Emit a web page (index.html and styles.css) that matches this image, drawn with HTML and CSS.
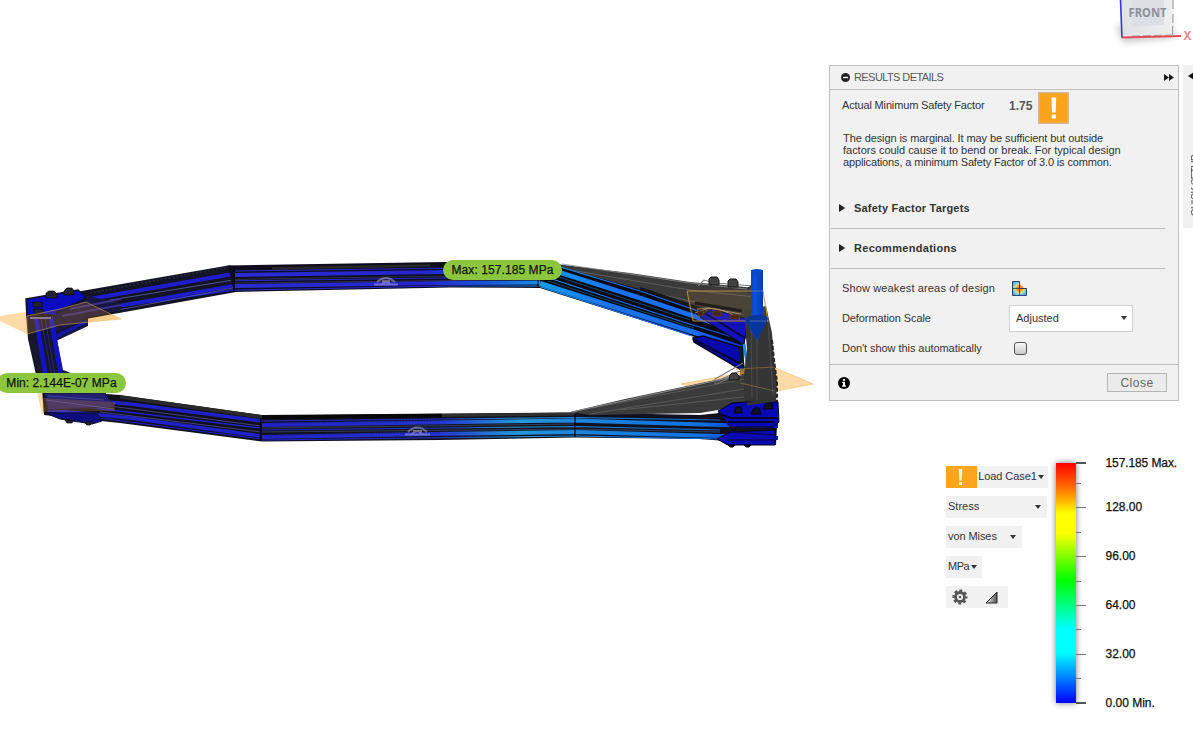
FILE: index.html
```
<!DOCTYPE html>
<html lang="en">
<head>
<meta charset="utf-8">
<title>Simulation Results</title>
<link rel="stylesheet" href="styles.css">
</head>
<body>
<main class="viewport">
  <svg class="scene" viewBox="0 0 1193 736" aria-hidden="true">
    <defs>
      <linearGradient id="stressTop" gradientUnits="userSpaceOnUse" x1="234" y1="0" x2="545" y2="0">
        <stop offset="0" stop-color="#2b2bd2"/><stop offset=".6" stop-color="#2424d0"/><stop offset=".8" stop-color="#1a50d8"/><stop offset="1" stop-color="#1590e6"/>
      </linearGradient>
      <linearGradient id="stressBottom" gradientUnits="userSpaceOnUse" x1="262" y1="0" x2="778" y2="0">
        <stop offset="0" stop-color="#2222c8"/><stop offset=".34" stop-color="#2233d0"/><stop offset=".5" stop-color="#2499da"/><stop offset=".6" stop-color="#1c86dc"/><stop offset=".85" stop-color="#0c72e2"/><stop offset="1" stop-color="#0714c8"/>
      </linearGradient>
      <linearGradient id="stressDiag" gradientUnits="userSpaceOnUse" x1="540" y1="0" x2="745" y2="0">
        <stop offset="0" stop-color="#129aea"/><stop offset=".35" stop-color="#1a72f0"/><stop offset=".75" stop-color="#1b6cf0"/><stop offset="1" stop-color="#0a2ad8"/>
      </linearGradient>
      <linearGradient id="arrow" x1="0" x2="1" y1="0" y2="0">
        <stop offset="0" stop-color="#0635b4"/><stop offset=".45" stop-color="#0a50d8"/><stop offset="1" stop-color="#052c98"/>
      </linearGradient>
      <linearGradient id="cube" x1="0" x2="1" y1="0" y2="0">
        <stop offset="0" stop-color="#dfe1e5"/><stop offset="1" stop-color="#efefef"/>
      </linearGradient>
      <filter id="soft" x="-30%" y="-50%" width="160%" height="200%"><feGaussianBlur stdDeviation="3"/></filter>
    </defs>

    <!-- work planes behind the frame -->
    <path d="M0 316L26 312L80 300L121 319L60 325L27 334L0 321Z" fill="#fddba6"/>
    <path d="M36 388L42 414L50 414L48 392Z" fill="#fddba6"/>
    <path d="M681 384L773 367L813 384L776 391L700 388Z" fill="#fddba6" stroke="#f6cb88"/>

    <!-- undeformed upper right rail -->
    <path d="M556 264L630 273L690 282L756 288L768 325L750 330L695 312L560 272Z" fill="#3a3a3a"/>
    <g fill="none" stroke="#666" stroke-width=".8">
      <path d="M562 264L690 283L756 290" stroke="#8b8b8b"/><path d="M570 270L690 290L755 297"/><path d="M590 279L690 301L742 311"/>
    </g>
    <path d="M640 289L705 311M610 284L640 293" stroke="#171717" stroke-width="4" fill="none"/>

    <!-- upper left rail -->
    <path d="M70 293L228 265.5L236 266V292L80 320Z" fill="#121324"/>
    <g fill="none" stroke="#1d1dcb">
      <path d="M84 300L233 274" stroke-width="4.2"/><path d="M60 316L233 286" stroke-width="3.8"/>
      <path d="M90 311L233 290" stroke-width="1.5"/><path d="M80 305L233 280" stroke="#6161a7" stroke-width=".8"/>
      <path d="M92 315L233 288" stroke="#6263b6" stroke-width=".7"/>
    </g>
    <path d="M90 293L228 267" stroke="#272735" stroke-width="2" stroke-dasharray="2 2"/>

    <!-- upper middle rail -->
    <path d="M228 265.5L445 262L562 265L540 288L450 287.5L234 292Z" fill="#0d0d1d"/>
    <path d="M272 268.5L430 265.5" stroke="#292929" stroke-width="2.5"/>
    <g fill="none" stroke="url(#stressTop)">
      <path d="M235 275L445 272L560 271" stroke-width="4"/><path d="M235 286L445 283L540 282.6" stroke-width="4"/>
      <path d="M235 271L445 268.2L560 267" stroke-width="1"/><path d="M235 280.8L445 278L545 277" stroke-width="1"/><path d="M235 290.2L450 286L540 286" stroke-width="1"/>
    </g>
    <path d="M235 279.3L450 276M235 283L545 279.5" stroke="#383858" stroke-width=".8"/>
    <path d="M234 268V291" stroke="#08080f"/>

    <!-- deformed upper right rail -->
    <path d="M556 266L646 291L706 315L748 328L742 352L540 288Z" fill="#050912"/>
    <g fill="none" stroke="url(#stressDiag)">
      <path d="M552 270L640 298L705 320L748 336" stroke-width="4.8"/>
      <path d="M540 283.5L693 332L742 348" stroke-width="5"/>
      <path d="M560 267L640 291L704 313" stroke-width="1.2"/>
      <path d="M546 277L680 321L745 341" stroke-width="1.1"/>
      <path d="M541 287L692 336" stroke-width="1.2"/>
    </g>
    <path d="M550 274L690 320M548 281L694 328" stroke="#18638d" stroke-width=".7"/>
    <path d="M538 278V288" stroke="#04131c"/>

    <!-- lower rail -->
    <path d="M42 389L120 395L262 415L575 412.5L700 415L778 407L776 445L700 439L575 437.5L440 440L262 441.5L120 423L44 415Z" fill="#11111e"/>
    <g fill="none" stroke="#2020c8">
      <path d="M46 396L130 404L261 421" stroke-width="3.5"/><path d="M48 410L130 418L261 436" stroke-width="3.6"/>
      <path d="M60 404L261 428" stroke-width="1.5"/><path d="M60 413L261 439" stroke-width="1"/>
      <path d="M110 406L261 426M100 412L261 432" stroke="#5555a0" stroke-width=".7"/>
    </g>
    <path d="M120 397L262 417" stroke="#292929" stroke-width="3.6"/>
    <path d="M262 417.2L442 415.6" stroke="#080808" stroke-width="3.5"/>
    <path d="M442 415.4L575 414" stroke="#303030" stroke-width="3"/>
    <g fill="none" stroke="url(#stressBottom)">
      <path d="M262 425L430 422.5L575 420.5L720 425L778 426" stroke-width="3.8"/>
      <path d="M262 437L430 434L575 432L720 436L778 438" stroke-width="4"/>
      <path d="M262 421L575 417.5L720 420" stroke-width="1.1"/>
      <path d="M262 430L575 426.5L720 430" stroke-width="1.1"/>
      <path d="M262 440L575 436L720 439" stroke-width="1"/>
    </g>
    <path d="M262 428L575 424M262 432L575 429L720 432" stroke="#3f4d63" stroke-width=".8" fill="none"/>
    <path d="M262 423.5L440 421.2M262 435.8L440 432.7" stroke="#16166a" stroke-width=".7" stroke-dasharray="1 2"/>
    <path d="M260.500 418V441M575 414V437" stroke="#06060c" stroke-width="1.3"/>

    <!-- left corner and upright -->
    <path d="M26 299L78 290L88 299L61 315L50 316L27 317Z" fill="#0b0bc1" stroke="#111128" stroke-width="1.5"/>
    <path d="M52 317L87 296L121 303V310L88 317V326L56 341Z" fill="#171740"/>
    <path d="M70 309L121 299M62 316L121 305" stroke="#3a3087" stroke-width="2"/>
    <path d="M56 313L86 299" stroke="#0e0e39" stroke-width="3"/>
    <path d="M55 334L87 319V324L57 339Z" fill="#14149c" stroke="#11112a"/>
    <path d="M26 314H52L63 370L76 375L64 390L39 388L28 339Z" fill="#17172b"/>
    <path d="M36 318L46 377M51 318L61 376" stroke="#1212cc" stroke-width="4.500"/>
    <path d="M41 319L52 376M45 318L55 376" stroke="#22228f" stroke-width="1"/>
    <path d="M30 318H51" stroke="#7773a4" stroke-width="2"/>
    <path d="M44 393H105L115 407L48 410Z" fill="#242071" stroke="#13132c"/>
    <path d="M46 400L114 409M48 396L104 400" stroke="#4444a0"/>
    <path d="M45 413H97L102 421L92 424L60 419Z" fill="#0d0d80" stroke="#11112a"/>
    <g fill="#23232e" stroke="#08080f" stroke-width=".7">
      <path d="M46 293L49 291H54L57 294V298H46ZM64 291L67 288H72L74 291V295H64Z"/>
      <path d="M33 302H42V307H33ZM34 309H43V314H34Z"/>
      <path d="M65 420H74L72 423H67ZM84 422H93L90 425H87Z"/>
    </g>
    <path d="M27 316L60 309L86 302L121 319L60 325L27 334Z" fill="#e59a2d" fill-opacity=".2" stroke="#eeb45f" stroke-opacity=".5"/>
    <path d="M43 398L115 402V411L43 412Z" fill="#d68b37" fill-opacity=".25"/>

    <!-- right gusset plates -->
    <path d="M693 338L703 336L743 348V371L694 342Z" fill="#0808ae" stroke="#07071e" stroke-width="1.5"/>
    <path d="M700 317L712 309L748 319L744 345Z" fill="#1212b8" stroke="#0a0a20"/>
    <path d="M706 314L745 338" stroke="#050535" stroke-width="1.5"/>
    <path d="M693 339L741 364" stroke="#050535" stroke-width="2"/>
    <path d="M740 369H746V381H740Z" fill="#b87710"/>
    <path d="M744 344L748 370" stroke="#168edc" stroke-width="3"/>
    <path d="M740 346L743 369" stroke="#071b29" stroke-width="4"/>

    <!-- undeformed lower rail and upright -->
    <path d="M570 412L625 399L744 374V404L718 410L700 413L590 415Z" fill="#3b3b3b"/>
    <path d="M592 408L744 379M620 410L744 397M590 414L744 389" stroke="#595959" fill="none"/>
    <path d="M572 412L742 375" stroke="#888"/>
    <path d="M744 310L766 306L772 333L774 360L777 382L776 403L744 405V375L747 350Z" fill="#353535"/>
    <path d="M751 325L752 398M768 321L773 395M757 335V400" stroke="#4b4b4b"/>
    <path d="M772 340L774 360L777 382V403" stroke="#242424" stroke-width="2" stroke-dasharray="4 2" fill="none"/>
    <g fill="none" stroke="#777" stroke-width="1.1">
      <path d="M698 286L704 280L714 283L754 286M715 384V379L743 363M717 381L745 369M716 384L738 374"/>
    </g>
    <g fill="#414141" stroke="#171717">
      <path d="M709 279L711 277H717L719 280V285H709ZM728 281L730 279H736L738 282V287H728ZM748 288L751 286H755V292H748Z"/>
      <path d="M730 375L732 373H736L739 376V380H729Z"/>
    </g>

    <!-- upper right work plane -->
    <path d="M687 291H763L768 321H693Z" fill="#f0a52d" fill-opacity=".09" stroke="#c7943f" stroke-width=".9"/>
    <path d="M695 313L709 308L741 314M697 309Q719 305 740 319" stroke="#b99a78" stroke-width=".8" fill="none"/>
    <path d="M698 311H703V316H698ZM713 311H721V316H713ZM730 315H739V319H730Z" fill="#42270f" stroke="#714018" stroke-width=".7"/>
    <path d="M695 303L742 311" stroke="#211d1b" stroke-width="3"/>

    <!-- lower right plates -->
    <path d="M718 411L732 403L747 402H778L779 422L773 427H730Z" fill="#0808b4" stroke="#05051b"/>
    <path d="M718 413L730 418H778M728 422H775M719 439L727 444H774" stroke="#04042f" stroke-width="2" fill="none"/>
    <path d="M717 439L730 432L775 430V445H728Z" fill="#0a0ab0" stroke="#05051b"/>
    <path d="M730 432L775 435M728 440H774" stroke="#080861" stroke-width="1.5"/>
    <g fill="#101029" stroke="#050510">
      <path d="M736 407H741L742 413H734ZM754 408H759L761 414H751ZM766 403H772L773 409H763Z"/>
      <path d="M728 445H735L733 447H730ZM744 445H751L749 447H746Z"/>
    </g>
    <path d="M747 404L775 400" stroke="#333" stroke-width="3"/>
    <path d="M736 369L775 367M740 383L775 391" stroke="#a47b38" stroke-opacity=".6"/>

    <!-- load arrow -->
    <path d="M751 270H763V318H768L757 341L745 320L751 317Z" fill="url(#arrow)"/>
    <path d="M745 319Q757 311 768 318L757 340Z" fill="#08369f"/>
    <ellipse cx="757" cy="271" rx="6" ry="2" fill="#0a49c5"/>
    <path d="M750 291H763M750 321H766" stroke="#8791a2" stroke-opacity=".55"/>

    <!-- symmetry glyphs -->
    <g fill="none" stroke="#c9c9da" stroke-opacity=".45">
      <path d="M374 284.500H398M377 282Q386 274 395 282M382 281H390M381 285Q386 279 391 285" stroke-width="1.8"/>
      <path d="M405 434.500H430M408 432Q417 423 427 432M413 431H422M412 434Q417 428 422 434" stroke-width="1.8"/>
    </g>

    <!-- orientation cube -->
    <path d="M1116 27L1123 43L1174 38L1170 10Z" fill="#a5a5a5" opacity=".55" filter="url(#soft)"/>
    <path d="M1120 0H1174L1172 36L1122 38Z" fill="url(#cube)"/>
    <path d="M1132 0H1164V25L1132 27Z" fill="#dce0e5"/>
    <path d="M1173 0V10M1173 14L1172.500 35" stroke="#999" stroke-dasharray="9 3"/>
    <path d="M1132 36L1171 35" stroke="#aaa" stroke-dasharray="8 3"/>
    <path d="M1120.500 0L1122 38" stroke="#3535e3" stroke-width="1.6"/>
    <path d="M1122 37.500L1181 36" stroke="#e14c55" stroke-width="1.8"/>
    <text class="cube-label" x="1128.500" y="17" textLength="38" lengthAdjust="spacingAndGlyphs">FRONT</text>
    <text class="axis-label" x="1183.500" y="40" textLength="8" lengthAdjust="spacingAndGlyphs">X</text>
  </svg>

  <div class="probe probe-max">Max: 157.185 MPa</div>
  <div class="probe probe-min">Min: 2.144E-07 MPa</div>

  <section class="panel">
    <header class="panel-head">
      <svg width="9" height="9" viewBox="0 0 9 9"><circle cx="4.500" cy="4.500" r="4.500" fill="#252525"/><path d="M2 4.500H7" stroke="#fff" stroke-width="1.4"/></svg>
      <h1 class="panel-title">RESULTS DETAILS</h1>
      <svg width="10" height="7" viewBox="0 0 10 7"><path d="M0 0L5 3.500L0 7ZM5 0L10 3.500L5 7Z" fill="#1d1d1d"/></svg>
    </header>
    <div class="factor">
      <span class="factor-name">Actual Minimum Safety Factor</span>
      <strong class="factor-value">1.75</strong>
      <svg class="factor-icon" width="31" height="32" viewBox="0 0 31 32"><path d="M.75 .75H30.250V31.250H.75Z" fill="#faa31b" stroke="#d7b58e" stroke-width="1.500"/><path d="M13.400 5.500H18.200L17.600 20.500H14ZM13.700 22.500H17.900V26.500H13.700Z" fill="#fff"/></svg>
    </div>
    <p class="advice"><span class="ln1">The design is marginal. It may be sufficient but outside</span><br><span class="ln2">factors could cause it to bend or break. For typical design</span><br><span class="ln3">applications, a minimum Safety Factor of 3.0 is common.</span></p>
    <div class="fold"><svg width="6" height="8" viewBox="0 0 6 8"><path d="M0 0L6 4L0 8Z" fill="#222"/></svg><span class="fold-targets">Safety Factor Targets</span></div>
    <div class="fold"><svg width="6" height="8" viewBox="0 0 6 8"><path d="M0 0L6 4L0 8Z" fill="#222"/></svg><span class="fold-recs">Recommendations</span></div>
    <div class="options">
      <div class="option"><span class="option-name weak">Show weakest areas of design</span>
        <svg class="weak-icon" width="15" height="15" viewBox="0 0 15 15"><defs><radialGradient id="heat" gradientUnits="userSpaceOnUse" cx="7.500" cy="7.500" r="8"><stop offset="0" stop-color="#ee5a1c"/><stop offset=".35" stop-color="#f7a024"/><stop offset=".55" stop-color="#d9e07a"/><stop offset=".75" stop-color="#80cdec"/><stop offset="1" stop-color="#57a7e0"/></radialGradient></defs><path d="M.5 .5H7.500V7.500H14.500V14.500H.5Z" fill="url(#heat)" stroke="#29476d"/><path d="M8 3.500Q11 4.500 11.500 7H8Z" fill="#f08a3c"/><path d="M.5 7.500H14.500M7.500 .5V14.500" stroke="#26394b" stroke-width=".8"/></svg>
      </div>
      <div class="option"><span class="option-name scale">Deformation Scale</span><div class="select"><span>Adjusted</span><i class="caret"></i></div></div>
      <div class="option"><span class="option-name auto">Don't show this automatically</span><span class="check"></span></div>
    </div>
    <footer class="panel-foot">
      <svg width="12" height="12" viewBox="0 0 12 12"><circle cx="6" cy="6" r="6" fill="#000"/><path d="M5 2H7V3.700H5ZM4.200 4.800H7V8.500H8V9.800H4V8.500H5V6H4.200Z" fill="#fff"/></svg>
      <div class="close">Close</div>
    </footer>
  </section>

  <aside class="tab">
    <svg width="6" height="8" viewBox="0 0 6 8"><path d="M6 0L0 4L6 8Z" fill="#111"/></svg>
    <span class="tab-name">QUICK SETUP</span>
  </aside>

  <section class="controls">
    <div class="chip load"><svg width="31" height="22" viewBox="0 0 31 22"><path d="M0 0H31V22H0Z" fill="#fca51d"/><path d="M12.700 3H16.300L15.700 14.500H13.300ZM13 16H16V19H13Z" fill="#fff4df"/></svg><span>Load Case1</span><i class="caret"></i></div>
    <div class="chip stress"><span>Stress</span><i class="caret"></i></div>
    <div class="chip mises"><span>von Mises</span><i class="caret"></i></div>
    <div class="chip unit"><span>MPa</span><i class="caret"></i></div>
    <div class="chip tools">
      <svg width="16" height="16" viewBox="-8 -8 16 16"><circle r="4.500" fill="none" stroke="#555" stroke-width="2.800"/><circle r="6.500" fill="none" stroke="#555" stroke-width="2.200" stroke-dasharray="2.900 2.205" stroke-dashoffset="1.450"/><circle r="1.300" fill="#555"/></svg>
      <svg width="13" height="13" viewBox="0 0 13 13"><defs><linearGradient id="ramp"><stop offset="0" stop-color="#eee"/><stop offset="1" stop-color="#555"/></linearGradient></defs><path d="M1 12L12 1V12Z" fill="url(#ramp)" stroke="#222"/></svg>
    </div>
  </section>

  <section class="legend">
    <div class="ramp"></div>
    <svg class="ticks" width="10" height="244" viewBox="0 0 10 244"><path d="M0 2H10M0 242H10" stroke="#555" stroke-width="1.800"/><path d="M0 46.500H10M0 95.500H10M0 144.500H10M0 193.500H10M0 22.500H5M0 71.500H5M0 120.500H5M0 168.500H5M0 217.500H5" stroke="#777"/></svg>
    <div class="labels"><span class="max">157.185 Max.</span><span>128.00</span><span>96.00</span><span>64.00</span><span>32.00</span><span>0.00 Min.</span></div>
  </section>
</main>
</body>
</html>
```
FILE: styles.css
```
* { box-sizing: border-box; }
body { margin: 0; background: #fff; font-family: "Liberation Sans", Arial, sans-serif; font-size: 11px; color: #333; }
.viewport { position: relative; width: 1193px; height: 736px; overflow: hidden; }
.scene { display: block; width: 1193px; height: 736px; }
svg { flex: none; }
.cube-label { font: bold 12px "Noto Sans", sans-serif; fill: #8b9199; }
.axis-label { font: bold 12px "Noto Sans", sans-serif; fill: #f58b91; }

/* result probes pinned on the model */
.probe { position: absolute; height: 20px; line-height: 20px; border-radius: 10px; background: #8cc63f; color: #101608; font-size: 12px; text-align: center; white-space: nowrap; -webkit-text-stroke: .25px #101608; }
.probe-max { left: 443px; top: 260px; width: 119px; letter-spacing: .08px; }
.probe-min { left: -3px; top: 373px; width: 129px; letter-spacing: .05px; }

/* floating results window */
.panel { position: absolute; left: 829px; top: 65px; width: 350px; height: 336px; display: flex; flex-direction: column; background: #f1f1f1; border: 1px solid #bfbfbf; white-space: nowrap; }
.panel-head { height: 24px; flex: none; display: flex; align-items: center; padding: 0 4px 0 11px; border-bottom: 1px solid #c4c4c4; }
.panel-title { margin: -1px auto 0 4px; font-size: 11px; font-weight: normal; color: #5a5a5a; letter-spacing: -.58px; }
.factor { height: 38px; flex: none; display: flex; align-items: flex-start; padding: 2px 0 0 12px; }
.factor-name { width: 167px; line-height: 27px; letter-spacing: -.15px; }
.factor-value { width: 29px; line-height: 28px; font-size: 12px; color: #555; }
.advice { margin: 4px 0 0 13px; height: 57px; line-height: 12px; flex: none; }
.ln1 { letter-spacing: -.09px; }
.ln2 { letter-spacing: -.02px; }
.ln3 { letter-spacing: -.14px; }
.fold { height: 40px; margin: 0 13px 0 1px; padding: 0 0 1px 8px; display: flex; align-items: center; gap: 9px; border-bottom: 1px solid #bdbdbd; font-size: 11px; font-weight: bold; letter-spacing: .2px; flex: none; }
.fold-recs { letter-spacing: .3px; }
.options { padding: 4px 0 0 12px; height: 95px; flex: none; }
.option { display: flex; align-items: center; height: 30px; }
.option-name { width: 167px; }
.weak { letter-spacing: .14px; }
.scale { letter-spacing: -.1px; }
.auto { letter-spacing: -.06px; }
.weak-icon { margin-left: 3px; }
.select { width: 124px; height: 27px; display: flex; align-items: center; justify-content: space-between; padding: 0 5px 0 6px; background: #fff; border: 1px solid #d3d3d3; }
.caret { display: block; flex: none; width: 0; height: 0; border-left: 3px solid transparent; border-right: 3px solid transparent; border-top: 4px solid #333; }
.check { width: 13px; height: 13px; margin-left: 5px; border: 1px solid #555; border-radius: 3px; background: linear-gradient(#f8f8f8, #c9c9c9); }
.panel-foot { flex: 1; display: flex; align-items: center; justify-content: space-between; padding: 0 11px 0 8px; border-top: 1px solid #bfbfbf; }
.close { width: 60px; height: 19px; line-height: 18px; text-align: center; border: 1px solid #b5b5b5; background: #ebebeb; color: #666; font-size: 12px; letter-spacing: .5px; }

/* docked tab at the window edge */
.tab { position: absolute; left: 1183px; top: 65px; width: 20px; height: 163px; background: #f1f1f1; display: flex; flex-direction: column; align-items: flex-start; justify-content: space-between; padding: 7px 0 12px 5px; }
.tab-name { writing-mode: vertical-rl; transform: rotate(180deg); font-size: 10px; line-height: 12px; margin-left: 2px; color: #555; white-space: nowrap; letter-spacing: -.6px; }

/* result display controls */
.controls { position: absolute; left: 946px; top: 466px; display: flex; flex-direction: column; align-items: flex-start; gap: 8px; }
.chip { height: 22px; display: flex; align-items: center; justify-content: space-between; background: #f1f1f1; padding: 0 4px 1px 2px; white-space: nowrap; }
.chip > span { padding-bottom: 1px; }
.load { width: 102px; padding: 0 4px 0 0; letter-spacing: -.08px; }
.load > span { padding-bottom: 2px; }
.stress { width: 101px; padding-right: 6px; }
.mises { width: 76px; padding-right: 6px; letter-spacing: -.08px; }
.unit { width: 36px; padding-right: 5px; letter-spacing: -.5px; }
.tools { width: 62px; padding: 0 10px 0 6px; }

.legend { position: absolute; left: 1056px; top: 461px; display: flex; }
.ramp { width: 20px; height: 240px; margin-top: 2px; background: linear-gradient(#f00, #f70 11%, #ff0 21%, #ff0 29%, #0f0 49%, #0ff 69%, #0ff 79%, #00f); box-shadow: 0 0 6px #777; }
.labels { margin: -6px 0 0 19.5px; color: #111; font-size: 12px; display: grid; grid-template-rows: 44px repeat(5, 49px); line-height: 16px; -webkit-text-stroke: .25px #111; white-space: nowrap; }
.max { letter-spacing: -.1px; }
```
